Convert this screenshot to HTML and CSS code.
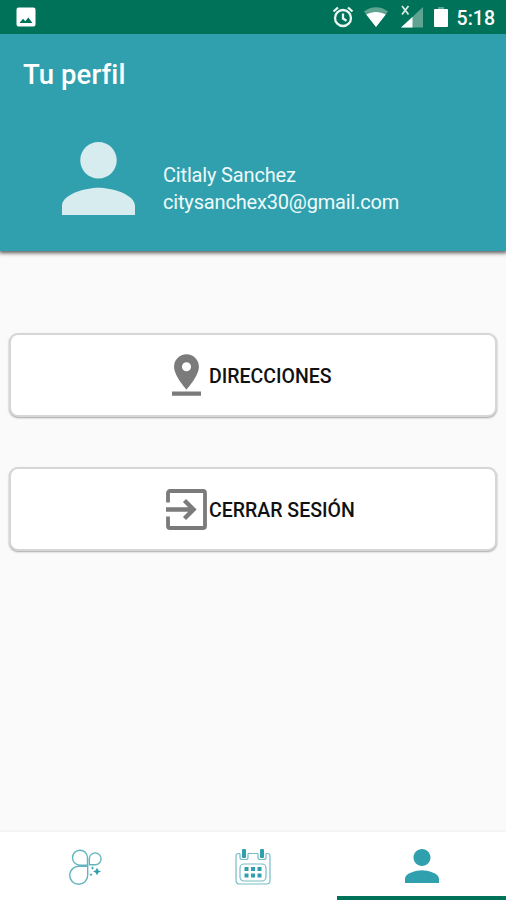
FILE: index.html
```html
<!DOCTYPE html>
<html lang="es">
<head>
    <meta charset="UTF-8">
    <meta name="viewport" content="width=device-width, initial-scale=1">
    <title>Tu perfil</title>
    <link rel="stylesheet" href="styles.css">
</head>
<body>
    <div class="status-bar">
        <svg class="icon-image" width="20" height="20" viewBox="0 0 20 20">
            <path fill="#fff" fill-rule="evenodd" d="M2.500 .5h15a2 2 0 0 1 2 2v15a2 2 0 0 1-2 2h-15a2 2 0 0 1-2-2v-15a2 2 0 0 1 2-2zM3.500 16h13l-4.200-5.500-3 3.800-2.300-2.500z"/>
        </svg>
        <svg class="icon-alarm" width="22" height="22" viewBox="0 0 22 22" fill="none" stroke="#e9f5f1" stroke-width="2.300">
            <circle cx="11" cy="12" r="8"/>
            <path d="M11 7.500v5l3.500 2.200M1.500 5.500l4.500-4M20.500 5.500l-4.500-4"/>
        </svg>
        <svg class="icon-wifi" width="26" height="20" viewBox="0 0 26 20">
            <path fill="#5fa491" d="M1 4.500C8-1.200 18-1.200 25 4.500L13 20z"/>
            <path fill="#fff" d="M3.200 7.500C9.500 4 16.500 4 22.800 7.500L13 20z"/>
        </svg>
        <svg class="icon-signal" width="24" height="23" viewBox="0 0 24 23">
            <path fill="#5fa491" d="M23 2v20.500H1z"/>
            <path fill="#fff" d="M12.500 12v10.500H1z"/>
            <path stroke="#d5ebe4" stroke-width="1.800" d="M2 1l6.500 8.500M8.500 1L2 9.500"/>
        </svg>
        <svg class="icon-battery" width="14" height="20" viewBox="0 0 14 20">
            <path fill="#5fa491" d="M4 0h6v3H4z"/>
            <path fill="#fff" d="M1 2h12a1 1 0 0 1 1 1v16a1 1 0 0 1-1 1H1a1 1 0 0 1-1-1V3a1 1 0 0 1 1-1z"/>
        </svg>
        <span class="clock">5:18</span>
    </div>

    <header class="header">
        <h1>Tu perfil</h1>
        <div class="profile">
            <svg class="avatar" viewBox="4 4 16 16">
                <path d="M12 12c2.210 0 4-1.790 4-4s-1.790-4-4-4-4 1.790-4 4 1.790 4 4 4zm0 2c-2.670 0-8 1.340-8 4v2h16v-2c0-2.660-5.330-4-8-4z"/>
            </svg>
            <div class="profile-info">
                <div class="name">Citlaly Sanchez</div>
                <div class="email">citysanchex30@gmail.com</div>
            </div>
        </div>
    </header>

    <main class="content">
        <button class="card addresses">
            <svg width="29" height="42" viewBox="5 2 14 20">
                <path d="M18 8c0-3.310-2.690-6-6-6S6 4.690 6 8c0 4.500 6 11 6 11s6-6.500 6-11zm-8.200 0a2.200 2.200 0 1 1 4.400 0a2.200 2.200 0 1 1-4.400 0zM5 20v2h14v-2H5z"/>
            </svg>
            <span>DIRECCIONES</span>
        </button>
        <button class="card logout">
            <svg width="41" height="41" viewBox="0 0 41 41">
                <path d="M2 13.500V4a2 2 0 0 1 2-2h33a2 2 0 0 1 2 2v33a2 2 0 0 1-2 2H4a2 2 0 0 1-2-2v-9.500" stroke-width="3.800"/>
                <path d="M0 20.500h27M18.500 11.500l9 9-9 9" stroke-width="4.400"/>
            </svg>
            <span>CERRAR SESIÓN</span>
        </button>
    </main>

    <nav class="tabs">
        <div class="tab">
            <svg class="icon-clover" width="34" height="36" viewBox="0 0 34 36" fill="none" stroke="#62b5be" stroke-width="1.400">
                <path d="M18.500 16.200H11.500A7.500 7.500 0 1 1 18.500 8.700z"/>
                <path d="M20.300 15.700V9.800A5.900 5.900 0 1 1 26.200 15.700z"/>
                <path d="M18.700 17.300H10.200A9 9 0 1 0 18.700 26.300z"/>
                <path fill="#2f9fac" stroke="none" d="M28 18.500l1.200 2.800 2.800 1.200-2.800 1.200-1.200 2.800-1.200-2.800-2.800-1.200 2.800-1.200zM23.500 17l.5 1.500 1.500.5-1.500.5-.5 1.500-.5-1.500-1.500-.5 1.500-.5zM22 24l.5 1.200 1.200.5-1.200.5-.5 1.200-.5-1.200-1.200-.5 1.200-.5z"/>
            </svg>
        </div>
        <div class="tab">
            <svg width="36" height="36" viewBox="0 0 36 36" fill="none" stroke="#76bec6" stroke-width="1.200">
                <path d="M5 4.500H3.500A2.500 2.500 0 0 0 1 7v24.500a3.500 3.500 0 0 0 3.500 3.500h27a3.500 3.500 0 0 0 3.500-3.500V7a2.500 2.500 0 0 0-2.500-2.500H31M13 4.500h10M5 4.500v4a2 2 0 0 0 2 2h4a2 2 0 0 0 2-2v-4M23 4.500v4a2 2 0 0 0 2 2h4a2 2 0 0 0 2-2v-4"/>
                <rect x="5" y="15" width="26" height="17" rx="4"/>
                <g fill="#2f9fac" stroke="none">
                    <rect x="7" y="0" width="4" height="9" rx="1"/>
                    <rect x="25" y="0" width="4" height="9" rx="1"/>
                    <rect x="9.500" y="18" width="4" height="4"/>
                    <rect x="16" y="18" width="4" height="4"/>
                    <rect x="22.500" y="18" width="4" height="4"/>
                    <rect x="9.500" y="24.500" width="4" height="4"/>
                    <rect x="16" y="24.500" width="4" height="4"/>
                    <rect x="22.500" y="24.500" width="4" height="4"/>
                </g>
            </svg>
        </div>
        <div class="tab active">
            <svg width="34" height="34" viewBox="4 4 16 16">
                <path fill="#30a0ae" d="M12 12c2.210 0 4-1.790 4-4s-1.790-4-4-4-4 1.790-4 4 1.790 4 4 4zm0 2c-2.670 0-8 1.340-8 4v2h16v-2c0-2.660-5.330-4-8-4z"/>
            </svg>
        </div>
    </nav>
</body>
</html>
```
FILE: styles.css
```css
* {
    box-sizing: border-box;
}
body {
    margin: 0;
    height: 900px;
    display: flex;
    flex-direction: column;
    overflow: hidden;
    font-family: Roboto, "Liberation Sans", sans-serif;
    background-color: #fafafa;
}
svg {
    display: block;
    flex: none;
}
.status-bar {
    display: flex;
    align-items: flex-start;
    height: 34px;
    padding: 7px 11px 0 16px;
    background-color: #007259;
    color: #fff;
}
.icon-alarm {
    margin-left: auto;
    margin-right: 9px;
    margin-top: -1px;
}
.icon-wifi {
    margin-right: 11px;
}
.icon-signal {
    margin-top: -2px;
    margin-right: 10px;
}
.icon-battery {
    margin-right: 9px;
}
.clock {
    font-size: 19.5px;
    line-height: 23px;
    font-weight: 500;
}
.header {
    height: 217px;
    padding: 25px 24px 0 23px;
    background-color: #31a0ae;
    box-shadow: 0 1px 4px 1px rgba(0, 0, 0, 0.65);
    clip-path: inset(0 0 -10px 0);
    color: #fff;
}
h1 {
    margin: 0;
    font-size: 27.5px;
    line-height: 32px;
    font-weight: 500;
    letter-spacing: 0.1px;
}
.profile {
    display: flex;
    align-items: flex-start;
    margin-top: 51px;
    padding-left: 39px;
}
.avatar {
    width: 73px;
    height: 73px;
    fill: #d6ecef;
}
.profile-info {
    margin-top: 20px;
    margin-left: 28px;
    font-size: 20px;
    line-height: 27px;
    letter-spacing: -0.17px;
    color: #effafb;
}
.content {
    flex: 1;
    display: flex;
    flex-direction: column;
    gap: 50px;
    padding: 82px 9px 0;
}
.card {
    display: flex;
    align-items: center;
    height: 84px;
    padding: 0 0 0 161px;
    border: 2px solid #d6d6d6;
    border-radius: 9px;
    background-color: #fff;
    box-shadow: 0 1px 2px rgba(0, 0, 0, 0.35);
    color: #111;
    font-family: inherit;
    font-size: 19.5px;
    font-weight: 500;
}
.card svg {
    fill: #7b7b7b;
}
.card span {
    padding-top: 3px;
}
.addresses svg {
    margin-right: 8px;
}
.logout {
    padding-left: 155px;
}
.logout svg {
    margin-right: 2px;
    fill: none;
    stroke: #7b7b7b;
}
.tabs {
    display: flex;
    height: 68px;
    background-color: #fff;
    box-shadow: 0 0 3px rgba(0, 0, 0, 0.08);
}
.tab {
    flex: 1;
    display: flex;
    justify-content: center;
    padding-top: 17px;
}
.icon-clover {
    margin-left: 3px;
}
.tab.active {
    border-bottom: 4px solid #007259;
}
```
